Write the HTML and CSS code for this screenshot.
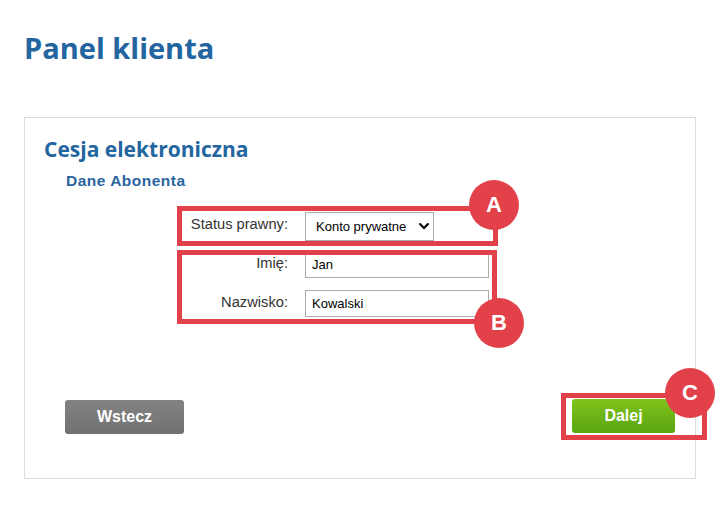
FILE: index.html
```html
<!DOCTYPE html>
<html lang="pl">
<head>
<meta charset="utf-8">
<title>Panel klienta</title>
<link rel="stylesheet" href="styles.css">
</head>
<body>
<div class="page">
  <h1 class="page-title">Panel klienta</h1>
  <section class="card">
    <h2 class="card-title">Cesja elektroniczna</h2>
    <h3 class="section-title">Dane Abonenta</h3>
    <div class="form">
      <div class="form-row row-status">
        <label class="form-label" for="status">Status prawny:</label>
        <div class="select-wrap">
          <select id="status" class="form-select"><option>Konto prywatne</option></select>
          <svg class="select-arrow" width="10" height="7" viewBox="0 0 10 7"><path d="M1.2 1.2 L5 5 L8.8 1.2" fill="none" stroke="#000" stroke-width="2.2" stroke-linecap="square"/></svg>
        </div>
      </div>
      <div class="form-row row-first">
        <label class="form-label" for="imie">Imię:</label>
        <input id="imie" class="form-input" type="text" value="Jan">
      </div>
      <div class="form-row">
        <label class="form-label" for="nazwisko">Nazwisko:</label>
        <input id="nazwisko" class="form-input" type="text" value="Kowalski">
      </div>
    </div>
    <div class="actions">
      <button class="btn btn-back" type="button">Wstecz</button>
      <button class="btn btn-next" type="button">Dalej</button>
    </div>

    <div class="annot-box box-a"></div>
    <div class="annot-box box-b"></div>
    <div class="annot-box box-c"></div>
    <div class="annot-badge badge-a">A</div>
    <div class="annot-badge badge-b">B</div>
    <div class="annot-badge badge-c">C</div>
  </section>
</div>
</body>
</html>
```

FILE: styles.css
```css
html, body {
  margin: 0;
  padding: 0;
  background: #ffffff;
}

body {
  font-family: "Liberation Sans", Arial, sans-serif;
  color: #333333;
}

.page {
  padding: 28px 19px 0 24px;
}

.page-title {
  margin: 0;
  font-family: "Open Sans", "Liberation Sans", sans-serif;
  font-weight: 700;
  font-size: 29px;
  line-height: 40px;
  color: #22659f;
}

.card {
  position: relative;
  margin-top: 49px;
  border: 1px solid #dcdcdc;
  padding: 17px 20px 44px 19px;
}

.card-title {
  margin: 0;
  font-family: "Open Sans", "Liberation Sans", sans-serif;
  font-weight: 700;
  font-size: 21px;
  line-height: 28px;
  color: #23659f;
}

.section-title {
  margin: 9px 0 0 22px;
  font-family: "Liberation Sans", Arial, sans-serif;
  font-weight: 700;
  font-size: 15.5px;
  line-height: 18px;
  letter-spacing: 0.5px;
  color: #2a65a0;
}

.form {
  margin-top: 22px;
  display: flex;
  flex-direction: column;
}

.form-row {
  display: flex;
  align-items: flex-start;
}

.row-status {
  margin-bottom: 10px;
}

.row-first {
  margin-bottom: 12px;
}

.form-label {
  width: 244px;
  padding: 3px 17px 0 0;
  text-align: right;
  font-size: 14.7px;
  line-height: 18px;
  color: #333333;
}

.select-wrap {
  position: relative;
  width: 129px;
  height: 29px;
}

.form-select {
  appearance: none;
  -webkit-appearance: none;
  box-sizing: border-box;
  width: 129px;
  height: 29px;
  margin: 0;
  padding: 0 0 0 10px;
  border: 1px solid #ababab;
  border-radius: 0;
  background: #ffffff;
  font-family: "Liberation Sans", Arial, sans-serif;
  font-size: 13px;
  color: #000000;
}

.select-arrow {
  position: absolute;
  right: 5px;
  top: 11px;
  pointer-events: none;
}

.form-input {
  box-sizing: border-box;
  width: 184px;
  height: 27px;
  margin: 0;
  padding: 0 6px;
  border: 1px solid #ababab;
  border-radius: 0;
  background: #ffffff;
  font-family: "Liberation Sans", Arial, sans-serif;
  font-size: 13px;
  color: #000000;
}

.actions {
  margin-top: 82px;
  padding-left: 21px;
  display: flex;
  justify-content: space-between;
  align-items: flex-start;
}

.btn {
  height: 34px;
  margin: 0;
  padding: 0;
  border: none;
  border-radius: 3px;
  font-family: "Liberation Sans", Arial, sans-serif;
  font-weight: 700;
  font-size: 16px;
  color: #ffffff;
  cursor: pointer;
}

.btn-back {
  width: 119px;
  margin-top: 1px;
  background: linear-gradient(#838383, #717171);
}

.btn-next {
  width: 103px;
  background: linear-gradient(#80c31c, #59a510);
}

.annot-box {
  position: absolute;
  box-sizing: border-box;
  border: 5px solid #e3414a;
}

.box-a {
  left: 152px;
  top: 88px;
  width: 321px;
  height: 40px;
}

.box-b {
  left: 152px;
  top: 132px;
  width: 320px;
  height: 74px;
}

.box-c {
  left: 536px;
  top: 275px;
  width: 146px;
  height: 47px;
}

.annot-badge {
  position: absolute;
  width: 50px;
  height: 50px;
  border-radius: 50%;
  background: #e3414a;
  color: #ffffff;
  font-family: "Liberation Sans", Arial, sans-serif;
  font-weight: 700;
  font-size: 22px;
  display: flex;
  align-items: center;
  justify-content: center;
}

.badge-a {
  left: 444px;
  top: 62px;
}

.badge-b {
  left: 449px;
  top: 180px;
}

.badge-c {
  left: 640px;
  top: 250px;
}
```
